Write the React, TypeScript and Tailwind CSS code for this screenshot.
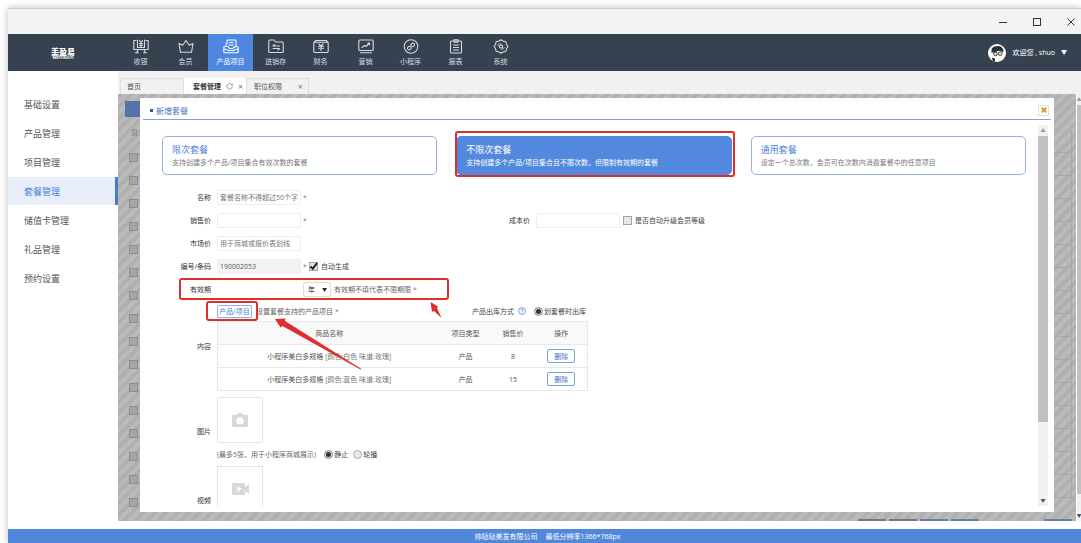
import { ReactNode } from "react";
import clsx from "clsx";

const STRIPES =
  "bg-[repeating-linear-gradient(135deg,#b0b0b0_0px,#b0b0b0_4px,#bababa_4px,#bababa_8px)]";

const Icon = ({ children }: { children: ReactNode }) => (
  <svg
    viewBox="0 0 16 15"
    className="h-[15px] w-4"
    fill="none"
    stroke="currentColor"
    strokeWidth="1.1"
    strokeLinecap="round"
    strokeLinejoin="round"
    aria-hidden="true"
  >
    {children}
  </svg>
);

const navItems = [
  {
    label: "收银",
    icon: (
      <>
        <path d="M3 1.500H.8V10.500H15.200V1.500H13" />
        <path d="M4.500 1V8.500H11.500V1M6.500 1.500 8 3.500 9.500 1.500M6.500 4.500H9.500M6.500 6.300H9.500M8 3.500V8" />
        <path d="M5 10.500 4 13.500M11 10.500 12 13.500M2.500 13.800H5.500M10.500 13.800H13.500" />
      </>
    ),
  },
  {
    label: "会员",
    icon: (
      <path d="M2.500 13.300H13.500L15 4.500 11.300 6.300 8 1.500 4.700 6.300 1 4.500Z" />
    ),
  },
  {
    label: "产品项目",
    active: true,
    icon: (
      <>
        <path d="M3 7V5.500Q3 4.500 4 4.500V2Q4 1 5 1H12Q13 1 13 2V7M6.500 3.500H10M6 6H10.500" />
        <path d="M5 7.500H2Q.8 7.500.8 8.700V12.500Q.8 13.800 2 13.800H14Q15.200 13.800 15.200 12.500V8.700Q15.200 7.500 14 7.500H12.500L9.500 9.500H6.500L5 7.500M1 10Q3.500 10 5.500 11.500H10.500Q12.500 10 15 10" />
      </>
    ),
  },
  {
    label: "进销存",
    icon: (
      <>
        <path d="M.8 12.500V2Q.8 1 1.800 1H6L7.500 3H14.200Q15.200 3 15.200 4V12.500Q15.200 13.500 14.200 13.500H1.800Q.8 13.500.8 12.500Z" />
        <path d="M11.500 7H5L6.500 5.500M5 9.500H11.500L10 11" />
      </>
    ),
  },
  {
    label: "财务",
    icon: (
      <>
        <path d="M2.500 1.500H13.500" />
        <rect x=".8" y="3.300" width="14.400" height="10.200" rx="1.300" />
        <path d="M6 5 8 7 10 5M5.500 7.300H10.500M5.500 9.300H10.500M8 7V11.500M1 3.500 3 1.500M15 3.500 13 1.500" />
      </>
    ),
  },
  {
    label: "营销",
    icon: (
      <>
        <rect x=".8" y="1" width="14.400" height="10.500" rx="1" />
        <path d="M4 8.500 6.500 6.500 8 7.500 11.500 4M9.800 4H11.500V5.700M2.500 13.800H13.500" />
      </>
    ),
  },
  {
    label: "小程序",
    icon: (
      <>
        <circle cx="8" cy="7.500" r="6.800" />
        <path d="M6.800 7.300Q4.500 7.500 4.500 9.300 4.700 11 6.300 11 8 10.800 8 9V6Q8 4.200 9.700 4 11.400 4 11.500 5.700 11.400 7.500 9.300 7.700" />
      </>
    ),
  },
  {
    label: "报表",
    icon: (
      <>
        <rect x="2.500" y="2" width="11" height="12" rx="1" />
        <path d="M6 .8H10V3.200H6ZM5.500 6H10.500M5.500 8.500H10.500M5.500 11H10.500" />
      </>
    ),
  },
  {
    label: "系统",
    icon: (
      <>
        <path d="M6 2 8 .7 10 2 12.800 2.700 13.500 5.500 15 7.500 13.500 9.500 12.800 12.300 10 13 8 14.300 6 13 3.200 12.300 2.500 9.500 1 7.500 2.500 5.500 3.200 2.700Z" />
        <circle cx="8" cy="7.500" r="1.600" />
        <path d="M4.800 6.500Q5.500 4.700 7.200 4.300M11.200 8.500Q10.500 10.300 8.800 10.700" strokeWidth=".8" />
      </>
    ),
  },
];

const sideItems = [
  "基础设置",
  "产品管理",
  "项目管理",
  "套餐管理",
  "储值卡管理",
  "礼品管理",
  "预约设置",
];

const cards = [
  { title: "限次套餐", text: "支持创建多个产品/项目集合有效次数的套餐" },
  {
    title: "不限次套餐",
    text: "支持创建多个产品/项目集合且不限次数，但限制有效期的套餐",
    active: true,
  },
  { title: "通用套餐", text: "设定一个总次数，会员可在次数内消费套餐中的任意项目" },
];

const products = [
  { name: "小程序美白多规格", spec: "[颜色:白色 味道:玫瑰]", type: "产品", price: 8 },
  { name: "小程序美白多规格", spec: "[颜色:蓝色 味道:玫瑰]", type: "产品", price: 15 },
];

const Star = () => <span className="w-2 text-center text-[#e05a5a]">*</span>;

const TitleBar = () => (
  <div className="flex h-[26px] shrink-0 items-center justify-end gap-[26px] border-t border-[#cfcfcf] bg-[#f3f3f3] pr-1.5 text-[#333]">
    <button aria-label="最小化">
      <svg viewBox="0 0 8 8" className="size-2" stroke="currentColor">
        <path d="M0 4.500H8" />
      </svg>
    </button>
    <button aria-label="最大化">
      <svg viewBox="0 0 8 8" className="size-2" stroke="currentColor" fill="none">
        <rect x=".5" y=".5" width="7" height="7" />
      </svg>
    </button>
    <button aria-label="关闭">
      <svg viewBox="0 0 8 8" className="size-2" stroke="currentColor">
        <path d="M.5.5 7.500 7.500M7.500.5.5 7.500" />
      </svg>
    </button>
  </div>
);

const Header = () => (
  <header className="flex h-[37px] shrink-0 bg-[#364250] text-[#d5dbe2]">
    <div className="flex w-[110px] shrink-0 flex-col items-center justify-center pt-px text-white">
      <span className="text-[8px] leading-[9px] font-black">美盈易</span>
      <span className="text-[4px] leading-[4px] font-bold">MEIYINGYI</span>
    </div>
    <nav className="flex">
      {navItems.map((item) => (
        <a
          key={item.label}
          href="#"
          className={clsx(
            "flex w-[45px] flex-col items-center gap-[3px] pt-[5px] leading-[9px]",
            item.active && "bg-[#4e87df] text-white"
          )}
        >
          <Icon>{item.icon}</Icon>
          {item.label}
        </a>
      ))}
    </nav>
    <button className="ml-auto flex items-center gap-1.5 pr-[14px] text-white">
      <svg viewBox="0 0 18 18" className="size-[18px]" aria-hidden="true">
        <circle cx="9" cy="9" r="9" fill="#fff" />
        <path
          d="M3.500 9Q2.500 3 7.500 2.300 14 1 15.500 6.500L15 8.500Q12 5.500 9 7.500 6 9 4.500 8.500Z"
          fill="#27313b"
        />
        <circle cx="7.500" cy="10" r="1.900" fill="#d9d3b8" stroke="#333" strokeWidth=".8" />
        <circle cx="12.200" cy="9.700" r="1.900" fill="#d9d3b8" stroke="#333" strokeWidth=".8" />
        <path d="M4 13.500 7 14.500 7 17.500 4.500 16.500Z" fill="#27313b" />
      </svg>
      <span>欢迎您 , shuo</span>
      <span className="text-[6px]">▼</span>
    </button>
  </header>
);

const Sidebar = () => (
  <aside className="flex w-[110px] shrink-0 flex-col gap-px bg-white pt-[19px]">
    {sideItems.map((item) => (
      <a
        key={item}
        href="#"
        className={clsx(
          "flex h-7 items-center pl-4 text-[9px]",
          item === "套餐管理"
            ? "border-r-[3px] border-[#4a7bc4] bg-[#e7eefa] text-[#4a7fd6]"
            : "text-[#555]"
        )}
      >
        {item}
      </a>
    ))}
  </aside>
);

const Tabs = () => (
  <div className="flex h-[23px] items-end bg-[#f1f1f1] pl-0.5 text-[#555]">
    <a href="#" className="flex h-4 w-16 items-center border border-b-0 border-[#ddd] pl-1.5">
      首页
    </a>
    <div className="flex h-4 w-[62px] items-center gap-[5px] bg-white pl-[9px] text-[#333]">
      <b>套餐管理</b>
      <button aria-label="刷新">
        <svg viewBox="0 0 8 8" className="size-[7px]" fill="none" stroke="#777" strokeWidth=".8">
          <path d="M6.500 1.800A3.200 3.200 0 1 0 7.200 4.200M7.300.8V2.500H5.500" />
        </svg>
      </button>
      <button aria-label="关闭套餐管理" className="text-[9px] text-[#777]">
        ×
      </button>
    </div>
    <div className="flex h-4 w-[63px] items-center justify-between border border-b-0 border-[#ddd] pr-[5px] pl-[7px]">
      职位权限
      <button aria-label="关闭职位权限" className="text-[9px] text-[#777]">
        ×
      </button>
    </div>
  </div>
);

const Scrollbar = ({ thumb, className }: { thumb: string; className: string }) => (
  <div
    className={clsx(
      "flex shrink-0 flex-col items-center overflow-hidden bg-[#f1f1f1] text-[5px] leading-[11px] text-[#555]",
      className
    )}
  >
    <span className="text-[#999]">▲</span>
    <div className={clsx("w-full bg-[#c1c1c1]", thumb)} />
    <span className="mt-auto">▼</span>
  </div>
);

// What still shows of the list page at the left of the dialog
const ListEdge = () => (
  <div className="flex w-[22px] shrink-0 flex-col overflow-hidden pt-[3px]">
    <div className="ml-[7px] h-4 shrink-0 bg-[#5573a8]" />
    <div className="flex h-[30px] shrink-0 items-center overflow-hidden pl-[13px] text-[#666]">
      贝
    </div>
    <div className="flex flex-col gap-[14px] pt-[6px] pl-[11px]">
      {Array.from({ length: 16 }, (_, i) => (
        <input
          key={i}
          type="checkbox"
          aria-label={`选择第${i + 1}行`}
          className="size-[9px] shrink-0 appearance-none border border-[#8d8d8d] bg-[#a6a6a6]"
        />
      ))}
    </div>
  </div>
);

const Row = ({
  label,
  htmlFor,
  children,
}: {
  label: string;
  htmlFor: string;
  children: ReactNode;
}) => (
  <div className="relative flex h-[23px] items-center">
    <label htmlFor={htmlFor} className="mr-1.5 w-[71px] text-right text-[#333]">
      {label}
    </label>
    {children}
  </div>
);

const inputClass =
  "h-[15px] w-[84px] rounded-[2px] border border-[#eee] px-0.5 text-[#555] placeholder:text-[#777] outline-none";

const Checkbox = ({ id, checked }: { id: string; checked?: boolean }) => (
  <span className="relative flex size-[9px]">
    <input
      id={id}
      type="checkbox"
      defaultChecked={checked}
      className="peer size-[9px] appearance-none border border-[#a5a5a5] bg-[#e6e6e6]"
    />
    <svg
      viewBox="0 0 9 9"
      className="pointer-events-none absolute inset-0 hidden peer-checked:block"
      fill="none"
      stroke="#222"
      strokeWidth="2"
    >
      <path d="M1.500 4.500 3.800 6.800 8 1" />
    </svg>
  </span>
);

const Radio = ({
  name,
  label,
  checked,
}: {
  name: string;
  label: string;
  checked?: boolean;
}) => (
  <label className="flex items-center gap-px text-[#444]">
    <input
      type="radio"
      name={name}
      defaultChecked={checked}
      className="size-[9px] appearance-none rounded-full border border-[#aaa] bg-[#e8e8e8] checked:bg-[#333] checked:shadow-[inset_0_0_0_1px_#e4e4e4]"
    />
    {label}
  </label>
);

const Highlight = ({ className }: { className: string }) => (
  <span
    className={clsx(
      "pointer-events-none absolute rounded-[3px] border-2 border-[#dd2f2b]",
      className
    )}
  />
);

const ProductTable = () => (
  <table className="w-[371px] table-fixed border-collapse border border-[#e8e8e8] text-center text-[#555]">
    <thead className="bg-[#f9f9f9]">
      <tr className="h-[23px]">
        <th className="w-[223px] font-normal">商品名称</th>
        <th className="w-[50px] font-normal">项目类型</th>
        <th className="w-[45px] font-normal">销售价</th>
        <th className="font-normal">操作</th>
      </tr>
    </thead>
    <tbody>
      {products.map((product) => (
        <tr key={product.spec} className="h-[23px] border-t border-[#e8e8e8]">
          <td>
            {product.name} <span className="text-[#777]">{product.spec}</span>
          </td>
          <td>{product.type}</td>
          <td>{product.price}</td>
          <td>
            <button className="h-[14px] w-7 rounded-[2px] border border-[#7b9fdc] text-[#3f6fc4]">
              删除
            </button>
          </td>
        </tr>
      ))}
    </tbody>
  </table>
);

const PackageForm = () => (
  <form className="relative pt-[11px]">
    <Row label="名称" htmlFor="name">
      <input id="name" placeholder="套餐名称不得超过50个字" className={inputClass} />
      <Star />
    </Row>
    <Row label="销售价" htmlFor="price">
      <div className="flex w-[237px] items-center">
        <input id="price" className={inputClass} />
        <Star />
      </div>
      <label htmlFor="cost" className="mr-1.5 w-[76px] text-right text-[#333]">
        成本价
      </label>
      <input id="cost" className={clsx(inputClass, "mr-[3px]")} />
      <Checkbox id="upgrade" />
      <label htmlFor="upgrade" className="ml-[3px] text-[#444]">
        是否自动升级会员等级
      </label>
    </Row>
    <Row label="市场价" htmlFor="market">
      <input id="market" placeholder="用于商城或报价表划线" className={inputClass} />
    </Row>
    <Row label="编号/条码" htmlFor="code">
      <input
        id="code"
        defaultValue="190002053"
        readOnly
        className={clsx(inputClass, "bg-[#f3f3f3]")}
      />
      <Star />
      <Checkbox id="auto" checked />
      <label htmlFor="auto" className="ml-[3px] text-[#444]">
        自动生成
      </label>
    </Row>
    <Row label="有效期" htmlFor="period">
      <input id="period" className="h-[15px] w-[84px] px-0.5 outline-none" />
      <span className="relative mr-[3px] ml-0.5 flex items-center">
        <select
          aria-label="有效期单位"
          className="h-[15px] w-7 appearance-none rounded-[2px] border border-[#ddd] pl-1 text-[#222]"
        >
          <option>年</option>
          <option>月</option>
          <option>日</option>
        </select>
        <span className="pointer-events-none absolute right-1 text-[5px] text-[#222]">▼</span>
      </span>
      <span className="text-[#666]">有效期不填代表不限期限</span>
      <Star />
      <Highlight className="top-0 left-[39px] h-[22px] w-[270px]" />
    </Row>

    <div className="flex items-center">
      <span className="mr-1.5 w-[71px] text-right text-[#333]">内容</span>
      <div className="w-[371px]">
        <div className="relative flex h-5 items-center">
          <button
            type="button"
            className="mr-1 h-[13px] w-[35px] rounded-[1px] border border-[#8fb0e6] text-[#4a7fd6]"
          >
            产品/项目
          </button>
          <span className="text-[#666]">设置套餐支持的产品项目</span>
          <Star />
          <span className="mr-1 ml-auto text-[#444]">产品出库方式</span>
          <svg viewBox="0 0 8 8" className="mr-2 size-2" fill="none" stroke="#4a90d9" strokeWidth=".8">
            <circle cx="4" cy="4" r="3.400" />
            <path d="M2.900 3.200Q3 2.200 4 2.200 5.100 2.300 5 3.200 4.900 3.800 4 4.200V4.900M4 5.500V6.200" />
          </svg>
          <span className="mr-0.5">
            <Radio name="outbound" label="划套餐时出库" checked />
          </span>
          <Highlight className="top-0 -left-[11px] h-5 w-[52px]" />
        </div>
        <ProductTable />
      </div>
    </div>

    <div className="flex items-center pt-1.5">
      <span className="mr-1.5 w-[71px] text-right text-[#333]">图片</span>
      <div>
        <button
          type="button"
          aria-label="上传图片"
          className="flex size-[46px] items-center justify-center border border-[#e5e5e5]"
        >
          <svg viewBox="0 0 16 14" className="h-[14px] w-4" fill="#d8d8d8">
            <path
              fillRule="evenodd"
              d="M1 2H4.500L6 0H10L11.500 2H15Q16 2 16 3V13Q16 14 15 14H1Q0 14 0 13V3Q0 2 1 2ZM8 4.300A3.600 3.600 0 1 0 8 11.500 3.600 3.600 0 1 0 8 4.300Z"
            />
          </svg>
        </button>
        <div className="flex h-[23px] items-center gap-[5px] text-[#666]">
          <span className="pr-[3px]">(最多5张，用于小程序商城展示)</span>
          <Radio name="display" label="静止" checked />
          <Radio name="display" label="轮播" />
        </div>
      </div>
    </div>

    <div className="flex items-center">
      <span className="mr-1.5 w-[71px] text-right text-[#333]">视频</span>
      <div className="h-[69px]">
        <button
          type="button"
          aria-label="上传视频"
          className="flex size-[46px] items-center justify-center border border-[#e5e5e5]"
        >
          <svg viewBox="0 0 17 12" className="h-3 w-[17px]" fill="#d8d8d8">
            <path
              fillRule="evenodd"
              d="M1 0H12Q13 0 13 1V4L17 1V11L13 8V11Q13 12 12 12H1Q0 12 0 11V1Q0 0 1 0ZM5.500 3V9L9.800 6Z"
            />
          </svg>
        </button>
      </div>
    </div>

    {/* pointers to the two highlighted fields */}
    <svg
      viewBox="0 0 240 80"
      className="pointer-events-none absolute top-[124px] left-[130px] h-20 w-60"
      fill="#dd2f2b"
      aria-hidden="true"
    >
      <path d="M5 20 15.500 19.500 15 22 91.500 70 90.500 70.500 12.500 27 10.500 28.500Z" />
      <path d="M160.500 3 168 7.500 167 9 171.500 19 164 12 162 13Z" />
    </svg>
  </form>
);

const Dialog = () => (
  <section className="flex min-w-0 flex-1 flex-col bg-white">
    <div className="mx-[3px] flex h-[22px] shrink-0 items-center justify-between border-b border-[#86a5c4] pt-[3px] pr-0.5 pl-[7px]">
      <h1 className="flex items-center gap-[3px] text-[8px] text-[#4673c4]">
        <span className="size-[3px] bg-[#35599c]" />
        新增套餐
      </h1>
      <button
        aria-label="关闭"
        className="flex size-[11px] items-center justify-center border border-[#e6dccb]"
      >
        <svg viewBox="0 0 6 6" className="size-1.5" stroke="#d69a2d" strokeWidth="2">
          <path d="M.8.8 5.200 5.200M5.200.8.8 5.200" />
        </svg>
      </button>
    </div>
    <div className="flex min-h-0 flex-1 pt-[5px] pr-1.5 pb-1.5">
      <div className="min-w-0 flex-1 overflow-hidden">
        <div className="flex gap-[19px] pt-[11px] pr-3 pl-[22px]">
          {cards.map((card) => (
            <button
              key={card.title}
              className={clsx(
                "relative flex h-[39px] flex-1 flex-col justify-center rounded-[5px] border pl-[9px] text-left",
                card.active
                  ? "border-[#5289df] bg-[#5289df] text-white"
                  : "border-[#96b1df] text-[#777]"
              )}
            >
              <span
                className={clsx(
                  "text-[9px] leading-[14px]",
                  !card.active && "text-[#4f83dc]"
                )}
              >
                {card.title}
              </span>
              <span className="leading-[11px]">{card.text}</span>
              {card.active && <Highlight className="-top-1.5 -right-1 -bottom-[3px] -left-0.5" />}
            </button>
          ))}
        </div>
        <PackageForm />
      </div>
      <Scrollbar className="w-[10px]" thumb="h-3/4" />
    </div>
  </section>
);

export default function App() {
  return (
    <div className="flex h-screen flex-col overflow-hidden bg-white pt-2 pl-2 font-['Open_Sans','Noto_Sans_CJK_SC',sans-serif] text-[7px] leading-[11px]">
      <div className="flex min-h-0 flex-1 flex-col shadow-[0_0_7px_#bbb]">
        <TitleBar />
        <Header />
        <div className="flex min-h-0 flex-1 bg-white">
          <Sidebar />
          <main className="flex min-w-0 flex-1 flex-col pb-2">
            <Tabs />
            <div className="flex min-h-0 flex-1">
              <div className={clsx("flex min-w-0 flex-1 flex-col pt-1", STRIPES)}>
                <div className="flex min-h-0 flex-1">
                  <ListEdge />
                  <Dialog />
                  <div className="flex w-[22px] shrink-0 flex-col overflow-hidden pt-8 pr-1">
                    {Array.from({ length: 16 }, (_, i) => (
                      <div
                        key={i}
                        className="h-[23px] shrink-0 border-r border-b border-[#a8a8a8]"
                      />
                    ))}
                  </div>
                </div>
                <div className="flex h-[9px] items-end justify-end gap-[3px] pr-1">
                  <span className="h-0.5 w-7 bg-[#777]" />
                  <span className="h-0.5 w-7 bg-[#777]" />
                  <span className="h-0.5 w-7 bg-[#6b7fa6]" />
                  <span className="h-0.5 w-7 bg-[#6b7fa6]" />
                  <span className="ml-[62px] h-0.5 w-7 bg-[#6b7fa6]" />
                </div>
              </div>
              <Scrollbar className="ml-px w-1" thumb="h-[91%]" />
            </div>
          </main>
        </div>
        <footer className="flex h-[14px] shrink-0 items-center justify-center gap-2 bg-[#5288db] pl-1.5 text-white">
          <span>帅哒哒美发有限公司</span>
          <span>最低分辨率1366*768px</span>
        </footer>
      </div>
    </div>
  );
}
